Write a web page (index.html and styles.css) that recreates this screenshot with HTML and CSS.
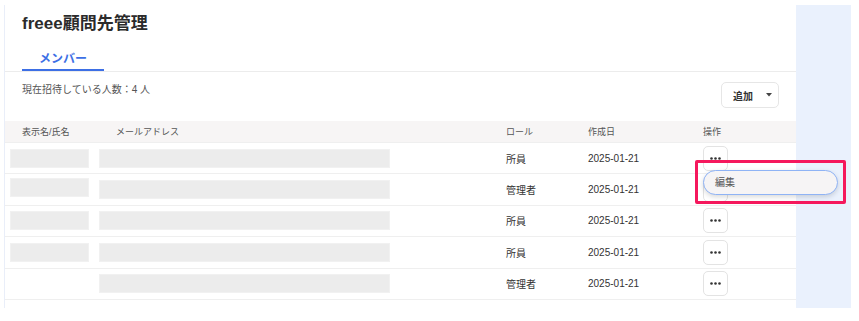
FILE: index.html
```html
<!DOCTYPE html>
<html lang="ja">
<head>
  <meta charset="UTF-8" />
  <title>freee顧問先管理</title>
  <link rel="stylesheet" href="styles.css">
</head>
<body>
  <div class="frame">
    <main class="panel">
      <h1 class="title">freee顧問先管理</h1>

      <nav class="tabs">
        <span class="tab active">メンバー</span>
      </nav>

      <div class="toolbar">
        <p class="count">現在招待している人数：4 人</p>
        <button class="add-btn">追加
          <svg width="6" height="4" viewBox="0 0 6 4"><polygon points="0,0 6,0 3,3.5" fill="#444"/></svg>
        </button>
      </div>

      <div class="table">
        <div class="row head">
          <div class="cell pad">表示名/氏名</div>
          <div class="cell pad">メールアドレス</div>
          <div class="cell">ロール</div>
          <div class="cell">作成日</div>
          <div class="cell">操作</div>
        </div>

        <div class="row">
          <div class="cell name"><span class="skel skel-name"></span></div>
          <div class="cell"><span class="skel skel-mail"></span></div>
          <div class="cell">所員</div>
          <div class="cell">2025-01-21</div>
          <div class="cell action">
            <button class="more-btn"><svg width="11" height="3" viewBox="0 0 11 3"><circle cx="1.5" cy="1.5" r="1.3"/><circle cx="5.5" cy="1.5" r="1.3"/><circle cx="9.5" cy="1.5" r="1.3"/></svg></button>
            <div class="menu-highlight">
              <div class="menu-item">編集</div>
            </div>
          </div>
        </div>

        <div class="row">
          <div class="cell name"><span class="skel skel-name up"></span></div>
          <div class="cell"><span class="skel skel-mail"></span></div>
          <div class="cell">管理者</div>
          <div class="cell">2025-01-21</div>
          <div class="cell action">
            <button class="more-btn"><svg width="11" height="3" viewBox="0 0 11 3"><circle cx="1.5" cy="1.5" r="1.3"/><circle cx="5.5" cy="1.5" r="1.3"/><circle cx="9.5" cy="1.5" r="1.3"/></svg></button>
          </div>
        </div>

        <div class="row">
          <div class="cell name"><span class="skel skel-name"></span></div>
          <div class="cell"><span class="skel skel-mail"></span></div>
          <div class="cell">所員</div>
          <div class="cell">2025-01-21</div>
          <div class="cell action">
            <button class="more-btn"><svg width="11" height="3" viewBox="0 0 11 3"><circle cx="1.5" cy="1.5" r="1.3"/><circle cx="5.5" cy="1.5" r="1.3"/><circle cx="9.5" cy="1.5" r="1.3"/></svg></button>
          </div>
        </div>

        <div class="row">
          <div class="cell name"><span class="skel skel-name"></span></div>
          <div class="cell"><span class="skel skel-mail"></span></div>
          <div class="cell">所員</div>
          <div class="cell">2025-01-21</div>
          <div class="cell action">
            <button class="more-btn"><svg width="11" height="3" viewBox="0 0 11 3"><circle cx="1.5" cy="1.5" r="1.3"/><circle cx="5.5" cy="1.5" r="1.3"/><circle cx="9.5" cy="1.5" r="1.3"/></svg></button>
          </div>
        </div>

        <div class="row">
          <div class="cell name"></div>
          <div class="cell"><span class="skel skel-mail"></span></div>
          <div class="cell">管理者</div>
          <div class="cell">2025-01-21</div>
          <div class="cell action">
            <button class="more-btn"><svg width="11" height="3" viewBox="0 0 11 3"><circle cx="1.5" cy="1.5" r="1.3"/><circle cx="5.5" cy="1.5" r="1.3"/><circle cx="9.5" cy="1.5" r="1.3"/></svg></button>
          </div>
        </div>
      </div>
    </main>
    <aside class="side"></aside>
  </div>
</body>
</html>
```

FILE: styles.css
```css
body {
  margin: 0;
  background: #fff;
  font-family: "Liberation Sans", "Noto Sans CJK JP", sans-serif;
  color: #333;
}

.frame {
  display: flex;
  margin: 5px 0 0 4px;
  width: 847px;
  height: 303px;
}

.panel {
  width: 791px;
  border-left: 1px solid #e9eef9;
  padding-top: 7px;
  box-sizing: content-box;
}

.side {
  width: 55px;
  background: #eaf1fd;
}

.title {
  margin: 0 0 0 17px;
  font-size: 17px;
  line-height: 24px;
  font-weight: bold;
  color: #2b2b2b;
}

.tabs {
  display: flex;
  border-bottom: 1px solid #ececec;
  padding-left: 17px;
}

.tab {
  width: 82px;
  text-align: center;
  padding: 14px 0 1px;
  line-height: 18px;
  font-size: 12px;
  font-weight: bold;
  color: #3d6fe5;
  border-bottom: 2px solid transparent;
}

.tab.active {
  border-bottom-color: #3d6fe5;
}

.toolbar {
  display: flex;
  justify-content: space-between;
  align-items: flex-start;
  padding: 10px 17px 13px;
}

.count {
  margin: 0;
  font-size: 10px;
  line-height: 16px;
  color: #555;
}

.add-btn {
  display: flex;
  align-items: center;
  gap: 13px;
  width: 58px;
  height: 26px;
  padding: 0 0 0 11px;
  border: 1px solid #e6e6e6;
  border-radius: 5px;
  background: #fff;
  font-family: inherit;
  font-size: 10px;
  font-weight: bold;
  color: #333;
}

.row {
  display: grid;
  grid-template-columns: 94px 407px 82px 115px 93px;
  height: 30.4px;
  border-bottom: 1px solid #efefef;
  font-size: 10px;
}

.row.head {
  height: 21px;
  background: #f7f5f5;
  font-size: 9px;
  color: #555;
}

.cell {
  display: flex;
  align-items: center;
}

.cell.pad {
  padding-left: 17px;
}

.cell.name {
  padding-left: 5px;
}

.skel {
  display: block;
  height: 19px;
  background: #ececec;
  border: 1px solid #f1f1f1;
  box-sizing: border-box;
}

.skel-name {
  width: 79px;
}

.skel-name.up {
  margin-top: -5px;
}

.skel-mail {
  width: 291px;
}

.action {
  position: relative;
}

.more-btn {
  display: flex;
  align-items: center;
  justify-content: center;
  width: 25px;
  height: 25px;
  padding: 0;
  border: 1px solid #e3e3e3;
  border-radius: 5px;
  background: #fff;
  fill: #333;
}

.menu-highlight {
  position: absolute;
  left: -8px;
  top: 17px;
  width: 151px;
  height: 44px;
  box-sizing: border-box;
  border: 3px solid #f5185d;
  border-radius: 2px;
  z-index: 2;
}

.menu-item {
  position: absolute;
  left: 5px;
  top: 7px;
  width: 135px;
  height: 25px;
  box-sizing: border-box;
  padding-left: 11px;
  line-height: 23px;
  font-size: 10px;
  color: #555;
  background: #f6f4f5;
  border: 1px solid #8fb3f5;
  border-radius: 13px;
  box-shadow: 0 2px 5px rgba(0, 0, 0, 0.15);
}
```
